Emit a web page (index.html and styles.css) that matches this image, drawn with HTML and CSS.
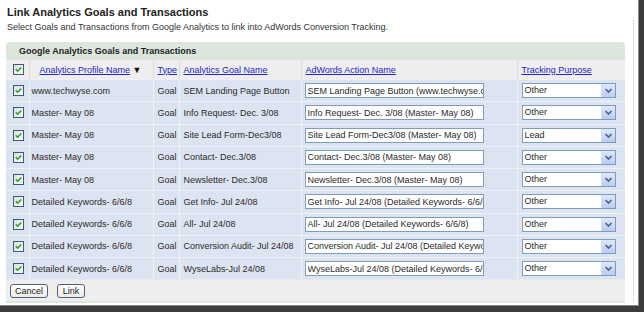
FILE: index.html
```html
<!DOCTYPE html>
<html>
<head>
<meta charset="utf-8">
<link rel="stylesheet" href="styles.css">
</head>
<body>
<svg width="0" height="0" class="defs">
  <defs>
    <linearGradient id="cbg" x1="0" y1="0" x2="1" y2="1">
      <stop offset="0" stop-color="#dcdcd6"/>
      <stop offset="1" stop-color="#ffffff"/>
    </linearGradient>
    <symbol id="cb" viewBox="0 0 11 11">
      <rect x="0.5" y="0.5" width="10" height="10" fill="url(#cbg)" stroke="#3b5a82"/>
      <path d="M2.7 5.3 L4.6 7.2 L8.3 3.4" fill="none" stroke="#21a121" stroke-width="1.5"/>
    </symbol>
    <symbol id="arr" viewBox="0 0 13 13">
      <path d="M3.5 5 L6.5 8 L9.5 5" fill="none" stroke="#4d6185" stroke-width="1.6"/>
    </symbol>
  </defs>
</svg>
<div class="frame">
  <div class="main">
    <h1 class="title">Link Analytics Goals and Transactions</h1>
    <p class="subtitle">Select Goals and Transactions from Google Analytics to link into AdWords Conversion Tracking.</p>
    <div class="panel">
      <div class="panel-head">Google Analytics Goals and Transactions</div>
      <table class="grid">
        <colgroup>
          <col class="c1"><col class="c2"><col class="c3"><col class="c4"><col class="c5"><col class="c6">
        </colgroup>
        <thead>
          <tr>
            <th class="chk"><svg class="cb"><use href="#cb"/></svg></th>
            <th class="prof"><a href="#">Analytics Profile Name</a> <span class="sort">▼</span></th>
            <th><a href="#">Type</a></th>
            <th><a href="#">Analytics Goal Name</a></th>
            <th><a href="#">AdWords Action Name</a></th>
            <th><a href="#">Tracking Purpose</a></th>
          </tr>
        </thead>
        <tbody>
          <tr><td class="chk"><svg class="cb"><use href="#cb"/></svg></td><td class="pn">www.techwyse.com</td><td>Goal</td><td>SEM Landing Page Button</td><td class="in"><input type="text" value="SEM Landing Page Button (www.techwyse.com)"></td><td class="sl"><span class="select"><span class="sv">Other</span><span class="sb"><svg><use href="#arr"/></svg></span></span></td></tr>
          <tr><td class="chk"><svg class="cb"><use href="#cb"/></svg></td><td class="pn">Master- May 08</td><td>Goal</td><td>Info Request- Dec. 3/08</td><td class="in"><input type="text" value="Info Request- Dec. 3/08 (Master- May 08)"></td><td class="sl"><span class="select"><span class="sv">Other</span><span class="sb"><svg><use href="#arr"/></svg></span></span></td></tr>
          <tr><td class="chk"><svg class="cb"><use href="#cb"/></svg></td><td class="pn">Master- May 08</td><td>Goal</td><td>Site Lead Form-Dec3/08</td><td class="in"><input type="text" value="Site Lead Form-Dec3/08 (Master- May 08)"></td><td class="sl"><span class="select"><span class="sv">Lead</span><span class="sb"><svg><use href="#arr"/></svg></span></span></td></tr>
          <tr><td class="chk"><svg class="cb"><use href="#cb"/></svg></td><td class="pn">Master- May 08</td><td>Goal</td><td>Contact- Dec.3/08</td><td class="in"><input type="text" value="Contact- Dec.3/08 (Master- May 08)"></td><td class="sl"><span class="select"><span class="sv">Other</span><span class="sb"><svg><use href="#arr"/></svg></span></span></td></tr>
          <tr><td class="chk"><svg class="cb"><use href="#cb"/></svg></td><td class="pn">Master- May 08</td><td>Goal</td><td>Newsletter- Dec.3/08</td><td class="in"><input type="text" value="Newsletter- Dec.3/08 (Master- May 08)"></td><td class="sl"><span class="select"><span class="sv">Other</span><span class="sb"><svg><use href="#arr"/></svg></span></span></td></tr>
          <tr><td class="chk"><svg class="cb"><use href="#cb"/></svg></td><td class="pn">Detailed Keywords- 6/6/8</td><td>Goal</td><td>Get Info- Jul 24/08</td><td class="in"><input type="text" value="Get Info- Jul 24/08 (Detailed Keywords- 6/6/8)"></td><td class="sl"><span class="select"><span class="sv">Other</span><span class="sb"><svg><use href="#arr"/></svg></span></span></td></tr>
          <tr><td class="chk"><svg class="cb"><use href="#cb"/></svg></td><td class="pn">Detailed Keywords- 6/6/8</td><td>Goal</td><td>All- Jul 24/08</td><td class="in"><input type="text" value="All- Jul 24/08 (Detailed Keywords- 6/6/8)"></td><td class="sl"><span class="select"><span class="sv">Other</span><span class="sb"><svg><use href="#arr"/></svg></span></span></td></tr>
          <tr><td class="chk"><svg class="cb"><use href="#cb"/></svg></td><td class="pn">Detailed Keywords- 6/6/8</td><td>Goal</td><td>Conversion Audit- Jul 24/08</td><td class="in"><input type="text" value="Conversion Audit- Jul 24/08 (Detailed Keywords- 6/6/8)"></td><td class="sl"><span class="select"><span class="sv">Other</span><span class="sb"><svg><use href="#arr"/></svg></span></span></td></tr>
          <tr><td class="chk"><svg class="cb"><use href="#cb"/></svg></td><td class="pn">Detailed Keywords- 6/6/8</td><td>Goal</td><td>WyseLabs-Jul 24/08</td><td class="in"><input type="text" value="WyseLabs-Jul 24/08 (Detailed Keywords- 6/6/8)"></td><td class="sl"><span class="select"><span class="sv">Other</span><span class="sb"><svg><use href="#arr"/></svg></span></span></td></tr>
        </tbody>
      </table>
      <div class="panel-foot">
        <button class="btn btn-cancel">Cancel</button>
        <button class="btn btn-link">Link</button>
      </div>
    </div>
  </div>
  <div class="vrule"></div>
</div>
</body>
</html>
```

FILE: styles.css
```css
html, body {
  margin: 0;
  padding: 0;
  background: #ffffff;
}
body {
  font-family: "Liberation Sans", Arial, sans-serif;
  color: #222;
  width: 644px;
  height: 312px;
  overflow: hidden;
}
.defs {
  position: absolute;
  width: 0;
  height: 0;
}
.frame {
  box-sizing: border-box;
  width: 644px;
  height: 312px;
  display: flex;
  border-right: 5px solid #3c3c3c;
  border-bottom: 6px solid #3c3c3c;
  box-shadow: inset -1px -1px 0 #8a8a8a;
}
.main {
  width: 627px;
  flex: 0 0 auto;
}
.vrule {
  width: 0;
  margin-left: 6px;
  margin-top: 20px;
  height: 282px;
  border-left: 1px dotted #c8c8c8;
}
.title {
  margin: 6px 0 0 7px;
  font-size: 11px;
  line-height: 13px;
  font-weight: bold;
  color: #222;
}
.subtitle {
  margin: 2px 0 0 7px;
  font-size: 9px;
  line-height: 12px;
  color: #333;
}
.panel {
  margin: 9px 0 0 6px;
  width: 619px;
  border-bottom: 2px solid #dde6dd;
}
.panel-head {
  height: 18px;
  line-height: 18px;
  background: #dde6dd;
  border-radius: 4px 4px 0 0;
  padding-left: 13px;
  font-size: 9px;
  font-weight: bold;
  color: #222;
}
.grid {
  width: 619px;
  table-layout: fixed;
  border-collapse: collapse;
  font-size: 9px;
}
.c1 { width: 23px; }
.c2 { width: 124px; }
.c3 { width: 26px; }
.c4 { width: 122px; }
.c5 { width: 216px; }
.c6 { width: 108px; }
.grid th {
  height: 19px;
  padding: 0 0 0 4px;
  background: #eeeeee;
  border-left: 1px solid #dcdcdc;
  text-align: left;
  font-weight: normal;
  white-space: nowrap;
}
.grid th:first-child { border-left: none; }
.grid th a {
  color: #2323cc;
  text-decoration: underline;
}
.grid th.prof { padding-left: 10px; }
.sort {
  font-size: 9px;
  color: #111;
}
.grid td {
  height: 21.25px;
  padding: 0 0 0 4px;
  background: #dde4f1;
  border-top: 1px solid #eef1f8;
  border-left: 1px solid #eef1f8;
  white-space: nowrap;
  overflow: hidden;
  color: #2a2a2a;
}
.grid td:first-child { border-left: none; }
.grid .chk {
  padding: 0 0 0 7px;
}
.grid td.pn { padding-left: 2px; }
.cb {
  display: block;
  width: 11px;
  height: 11px;
}
.grid td.in { padding-left: 3px; }
.in input {
  display: block;
  box-sizing: border-box;
  width: 179px;
  height: 15px;
  margin: 0;
  padding: 0 0 0 2px;
  border: 1px solid #7f9db9;
  background: #fff;
  font-family: "Liberation Sans", Arial, sans-serif;
  font-size: 9px;
  color: #2a2a2a;
  outline: none;
}
.grid td.sl { padding-left: 4px; }
.select {
  box-sizing: border-box;
  display: flex;
  width: 94px;
  height: 15px;
  border: 1px solid #7f9db9;
  background: #fff;
}
.sv {
  flex: 1;
  padding-left: 2px;
  line-height: 13px;
  font-size: 9px;
  color: #2a2a2a;
}
.sb {
  width: 13px;
  height: 13px;
  background: linear-gradient(#dfe8fb, #b8cdf4);
  border-left: 1px solid #d4def3;
}
.sb svg {
  display: block;
  width: 13px;
  height: 13px;
}
.panel-foot {
  height: 21px;
  background: #eeeeee;
  display: flex;
  align-items: center;
  gap: 9px;
  padding-left: 4px;
  border-top: 1px solid #e6e9ef;
}
.btn {
  box-sizing: border-box;
  height: 14px;
  margin: 0;
  padding: 0;
  border: 1px solid #4d6185;
  border-radius: 3px;
  background: linear-gradient(#ffffff, #ecebe4);
  font-family: "Liberation Sans", Arial, sans-serif;
  font-size: 9px;
  line-height: 12px;
  color: #222;
}
.btn-cancel { width: 38px; }
.btn-link { width: 28px; }
```
